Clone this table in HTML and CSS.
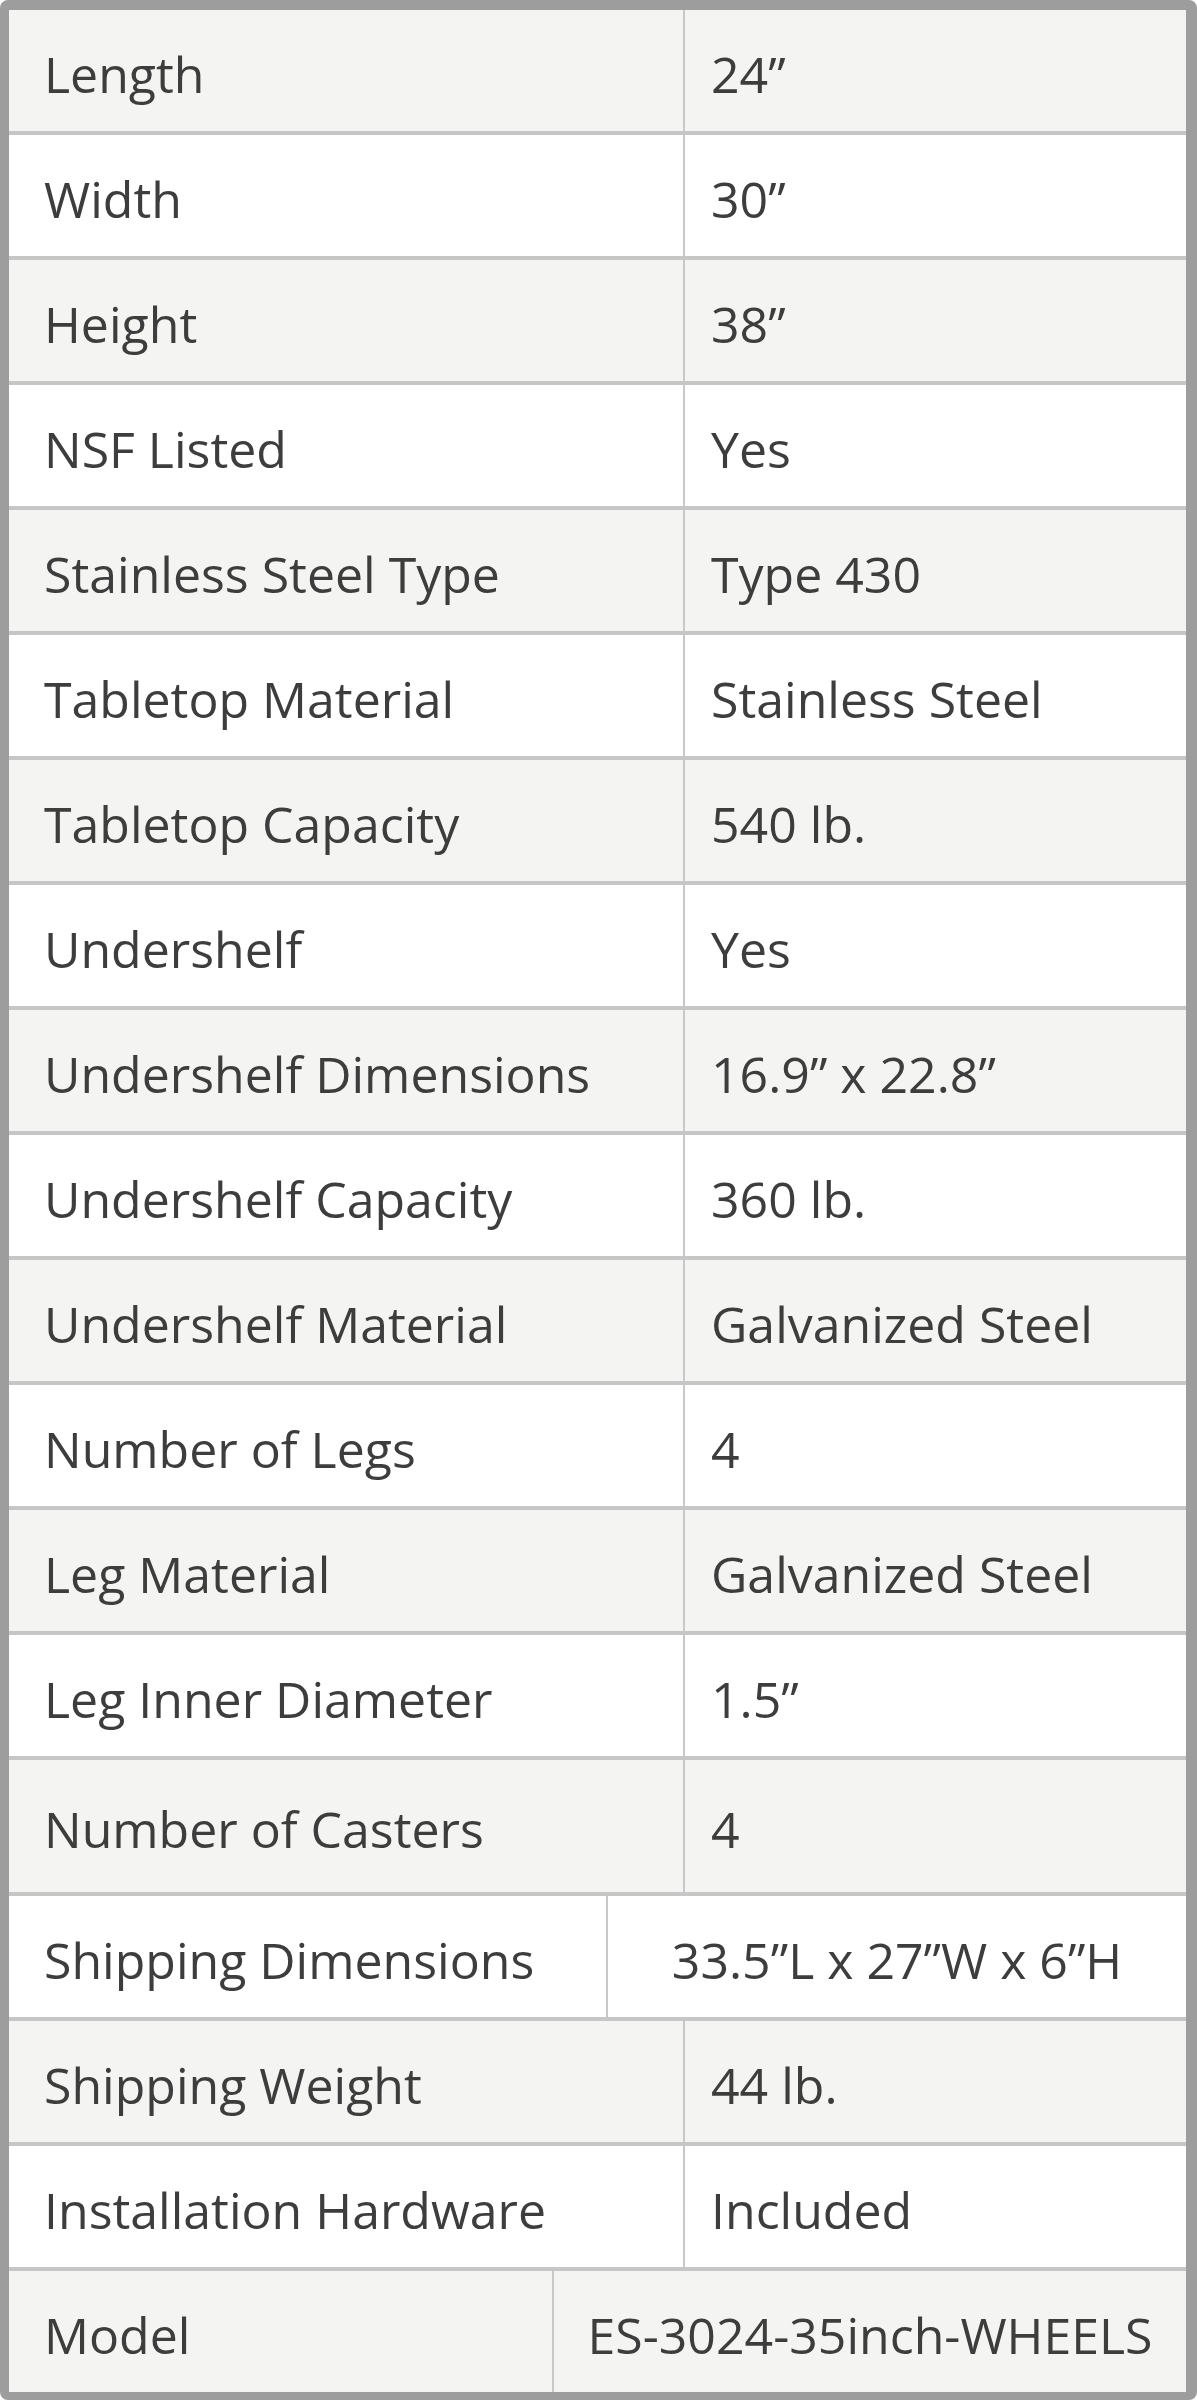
FILE: index.html
```html
<!DOCTYPE html>
<html>
<head>
<meta charset="utf-8">
<link rel="stylesheet" href="styles.css">
</head>
<body>
<div class="spec">
  <div class="row shade"><div class="key">Length</div><div class="val">24”</div></div>
  <div class="row"><div class="key">Width</div><div class="val">30”</div></div>
  <div class="row shade"><div class="key">Height</div><div class="val">38”</div></div>
  <div class="row"><div class="key">NSF Listed</div><div class="val">Yes</div></div>
  <div class="row shade"><div class="key">Stainless Steel Type</div><div class="val">Type 430</div></div>
  <div class="row"><div class="key">Tabletop Material</div><div class="val">Stainless Steel</div></div>
  <div class="row shade"><div class="key">Tabletop Capacity</div><div class="val">540 lb.</div></div>
  <div class="row"><div class="key">Undershelf</div><div class="val">Yes</div></div>
  <div class="row shade"><div class="key">Undershelf Dimensions</div><div class="val">16.9” x 22.8”</div></div>
  <div class="row"><div class="key">Undershelf Capacity</div><div class="val">360 lb.</div></div>
  <div class="row shade"><div class="key">Undershelf Material</div><div class="val">Galvanized Steel</div></div>
  <div class="row"><div class="key">Number of Legs</div><div class="val">4</div></div>
  <div class="row shade"><div class="key">Leg Material</div><div class="val">Galvanized Steel</div></div>
  <div class="row"><div class="key">Leg Inner Diameter</div><div class="val">1.5”</div></div>
  <div class="row shade"><div class="key">Number of Casters</div><div class="val">4</div></div>
  <div class="row row-ship"><div class="key">Shipping Dimensions</div><div class="val center">33.5”L x 27”W x 6”H</div></div>
  <div class="row shade"><div class="key">Shipping Weight</div><div class="val">44 lb.</div></div>
  <div class="row"><div class="key">Installation Hardware</div><div class="val">Included</div></div>
  <div class="row shade row-model"><div class="key">Model</div><div class="val center">ES-3024-35inch-WHEELS</div></div>
</div>
</body>
</html>
```
FILE: styles.css
```css
html, body {
  margin: 0;
  padding: 0;
  background: #ffffff;
}

.spec {
  box-sizing: border-box;
  width: 1197px;
  height: 2400px;
  border-style: solid;
  border-color: #9e9d9e;
  border-width: 10px 11px 8px 9px;
  border-radius: 8px;
  display: grid;
  grid-template-rows: repeat(14, 1fr) 132px repeat(4, 1fr);
  font-family: "Open Sans", "Lato", sans-serif;
  font-size: 50px;
  color: #3d3d3d;
  background: #c6c6c6;
  row-gap: 4px;
}

.row {
  display: grid;
  grid-template-columns: 674px 1fr;
  background: #ffffff;
}

.row.shade {
  background: #f4f4f3;
}

.row-ship {
  grid-template-columns: 597px 1fr;
}

.row-model {
  grid-template-columns: 543px 1fr;
}

.key {
  display: flex;
  align-items: center;
  padding-left: 35px;
  padding-top: 6px;
}

.val {
  display: flex;
  align-items: center;
  padding-left: 26px;
  padding-top: 6px;
  border-left: 2px solid #c8c8c8;
}

.val.center {
  justify-content: center;
  padding-left: 0;
}
```
